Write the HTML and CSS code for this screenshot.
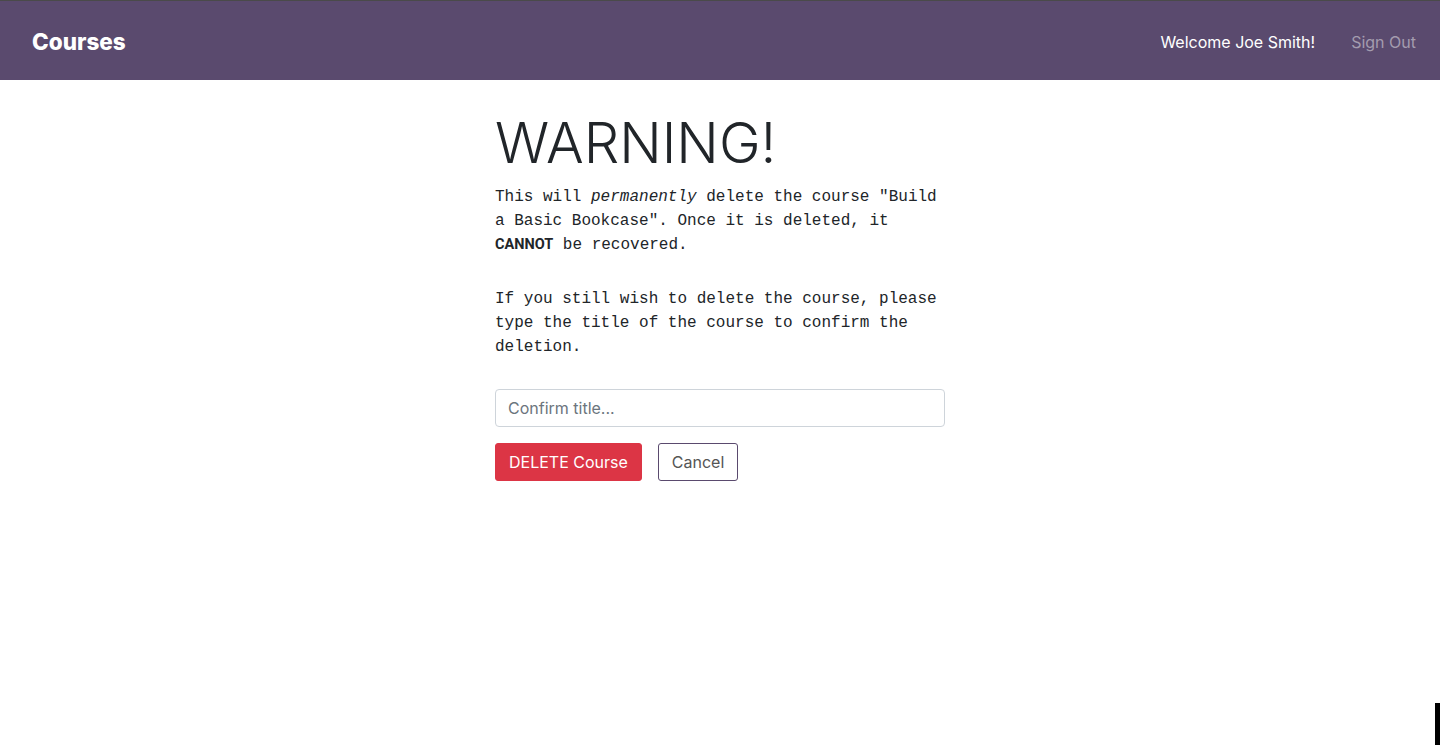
FILE: index.html
```html
<!DOCTYPE html>
<html lang="en">
<head>
<meta charset="utf-8">
<title>Delete Course</title>
<link rel="stylesheet" href="styles.css">
</head>
<body>
<header class="navbar">
  <a class="brand" href="#">Courses</a>
  <nav class="nav-right">
    <span class="welcome">Welcome Joe Smith!</span>
    <a class="signout" href="#">Sign Out</a>
  </nav>
</header>
<main class="content">
  <h1 class="title">WARNING!</h1>
  <p class="text">This will <em>permanently</em> delete the course "Build a Basic Bookcase". Once it is deleted, it <strong>CANNOT</strong> be recovered.</p>
  <p class="text text-second">If you still wish to delete the course, please type the title of the course to confirm the deletion.</p>
  <form class="form">
    <input class="input" type="text" placeholder="Confirm title...">
    <div class="actions">
      <button class="btn btn-danger" type="button">DELETE Course</button>
      <button class="btn btn-outline" type="button">Cancel</button>
    </div>
  </form>
</main>
<div class="edge-mark"></div>
</body>
</html>
```
FILE: styles.css
```css
* { box-sizing: border-box; }
html, body { margin: 0; padding: 0; }
body {
  font-family: Inter, "Liberation Sans", sans-serif;
  color: #212529;
  background: #fff;
  width: 1440px;
  height: 756px;
  overflow: hidden;
}
.navbar {
  height: 80px;
  background: #5a4a6e;
  border-top: 1px solid #4a4a4a;
  display: flex;
  align-items: center;
  justify-content: space-between;
  padding: 2px 24px 0 32px;
}
.brand {
  color: #fff;
  text-decoration: none;
  font-family: Inter, sans-serif;
  font-weight: 800;
  font-size: 22.5px;
}
.nav-right {
  display: flex;
  align-items: center;
  gap: 36px;
  font-size: 16px;
}
.welcome { color: #fff; }
.signout { color: #a49cae; text-decoration: none; }
.content {
  width: 450px;
  margin: 0 auto;
  padding-top: 30px;
}
.title {
  font-family: Inter, sans-serif;
  font-weight: 300;
  font-size: 56px;
  line-height: 67px;
  margin: 0 0 8px;
  color: #212529;
}
.text {
  font-family: "Liberation Mono", "Courier New", monospace;
  font-size: 16px;
  line-height: 24px;
  margin: 0 0 30px;
  color: #212529;
}
.text strong {
  font-family: Roboto, "Liberation Sans", sans-serif;
  font-weight: 700;
  font-size: 14.5px;
  line-height: 16px;
}
.text-second { margin-bottom: 30px; }
.form { display: flex; flex-direction: column; gap: 16px; }
.input {
  width: 450px;
  height: 38px;
  border: 1px solid #ced4da;
  border-radius: 4px;
  padding: 0 12px;
  font-family: Inter, sans-serif;
  font-size: 16px;
  color: #495057;
}
.input::placeholder { color: #6c757d; }
.actions { display: flex; gap: 16px; }
.btn {
  height: 38px;
  padding: 0 13px;
  border-radius: 3px;
  font-family: Inter, sans-serif;
  font-size: 16px;
  cursor: pointer;
}
.btn-danger {
  background: #dc3545;
  border: 1px solid #dc3545;
  color: #fff;
}
.btn-outline {
  background: #fff;
  border: 1px solid #5a4a6e;
  color: #555;
}
.edge-mark {
  position: absolute;
  right: 0;
  top: 703px;
  width: 5px;
  height: 42px;
  background: #000;
}
```
